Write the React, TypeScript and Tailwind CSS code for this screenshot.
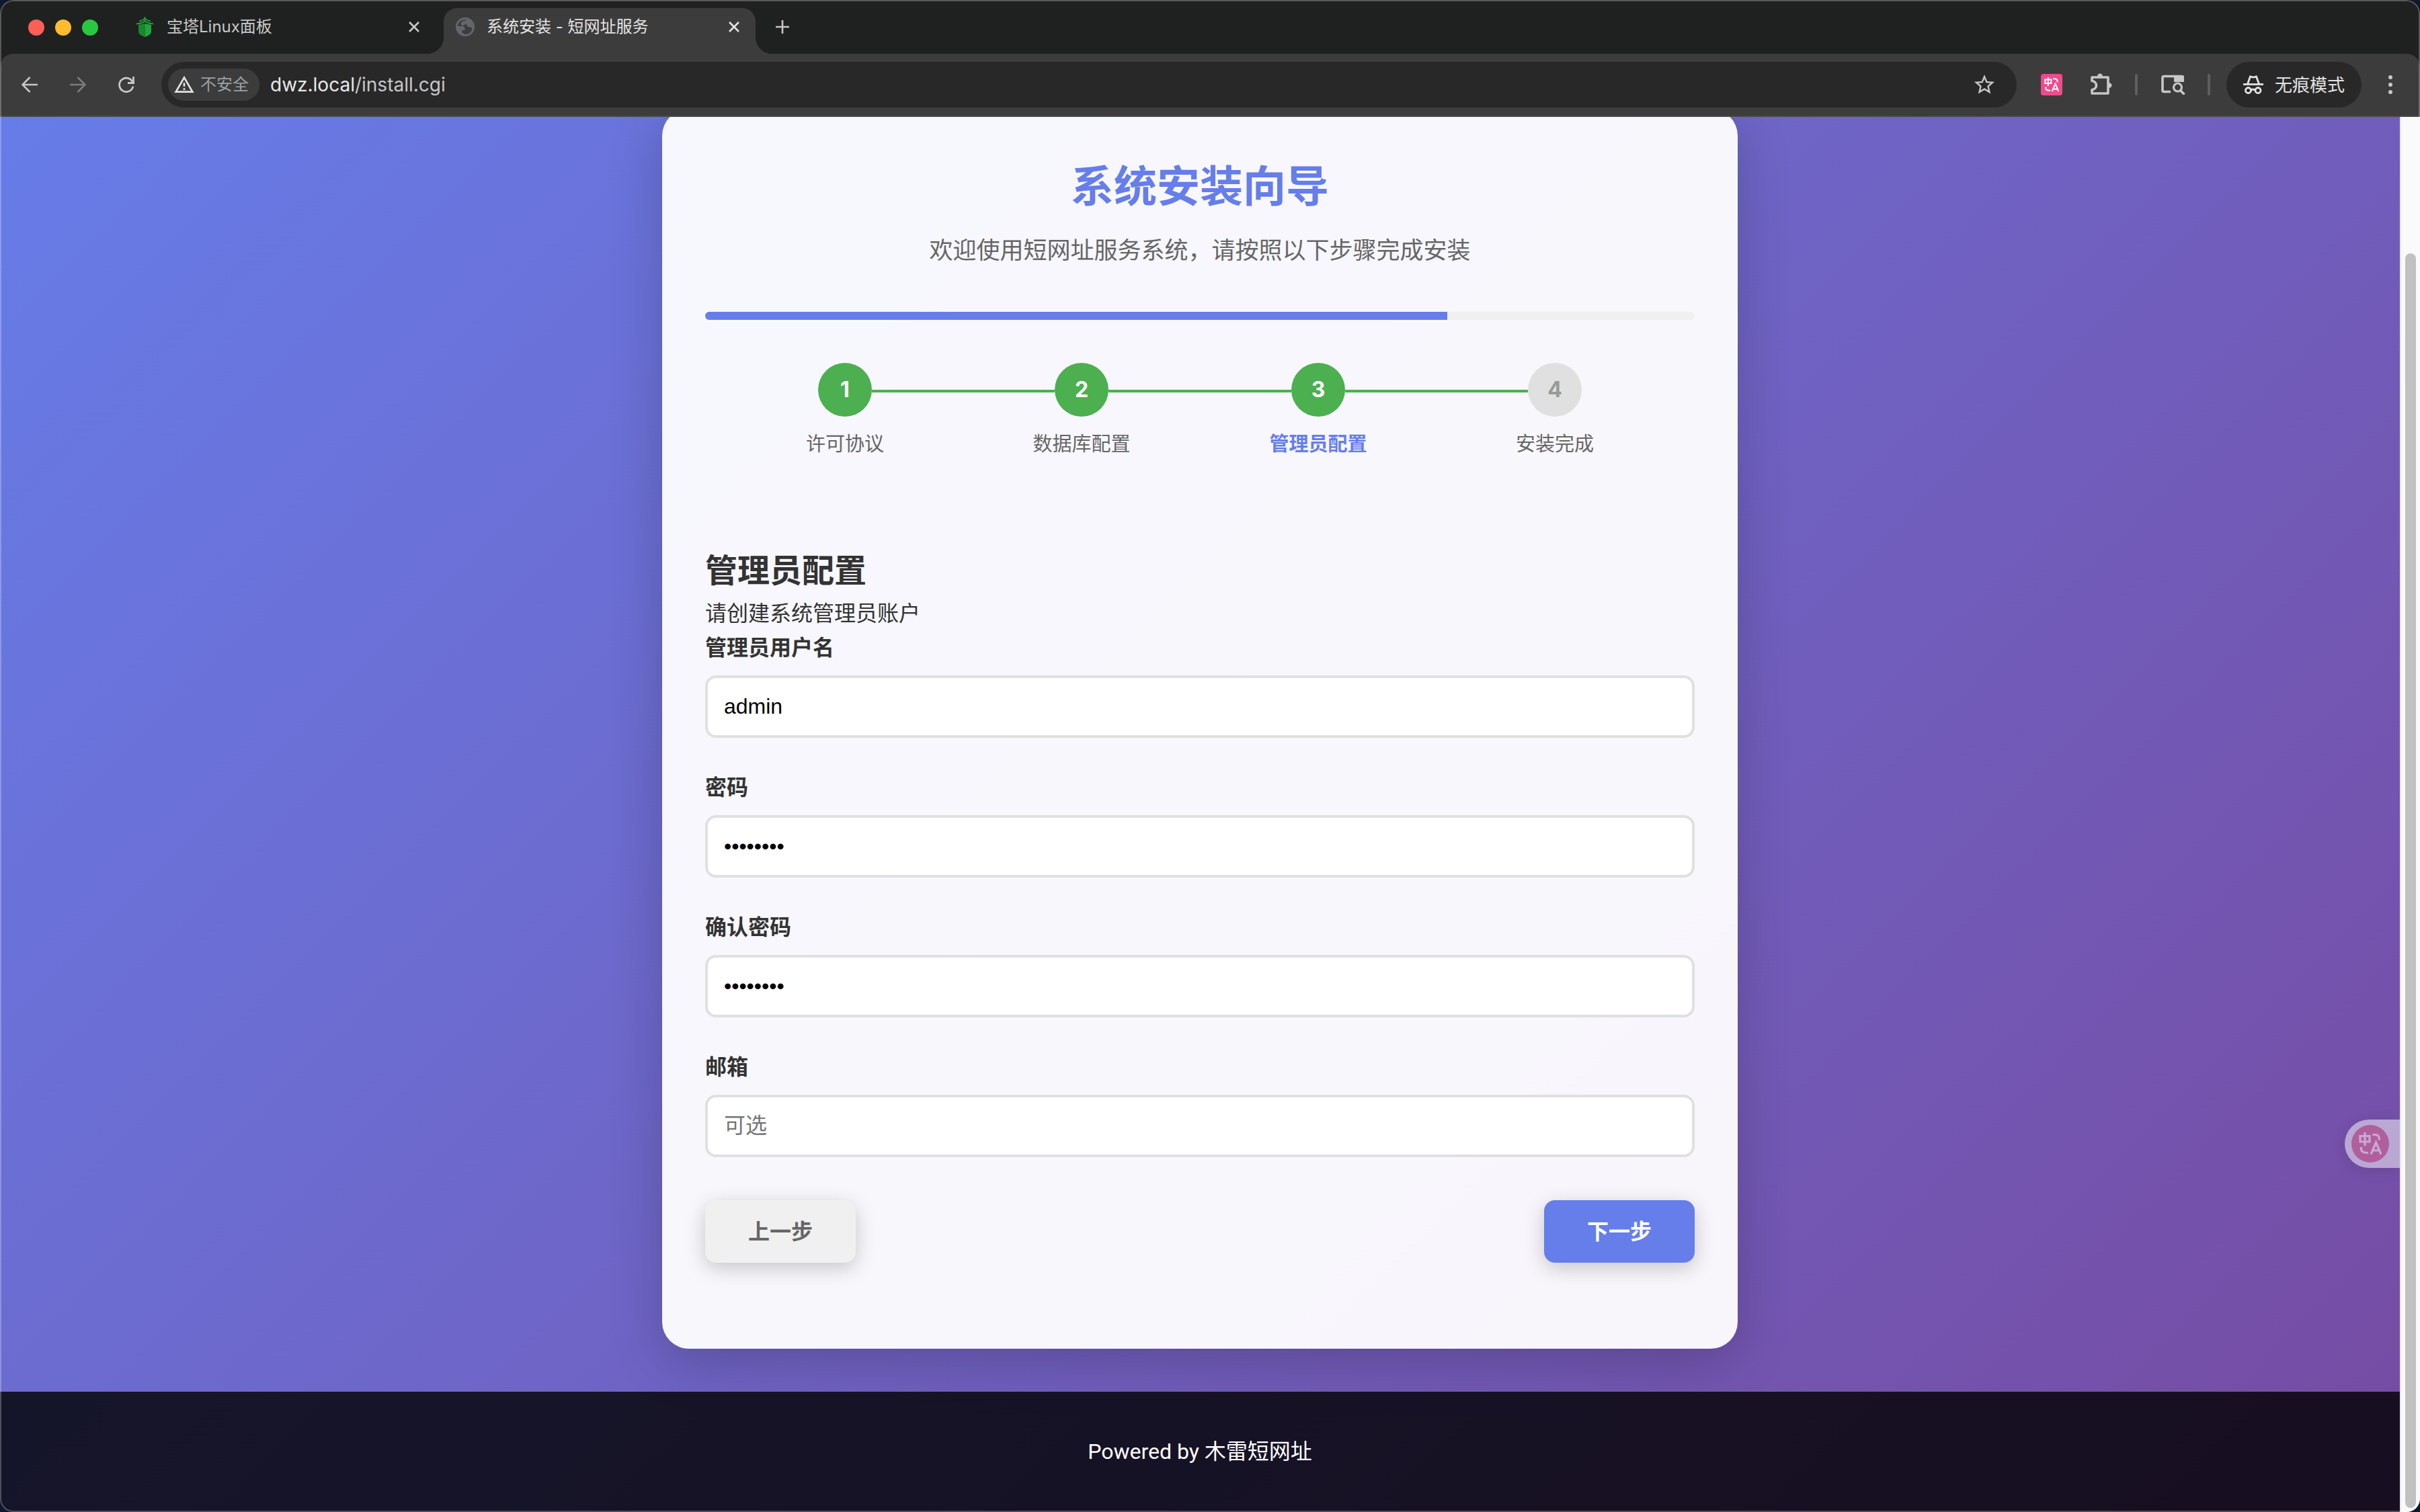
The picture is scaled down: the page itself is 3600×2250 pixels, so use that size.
import { useState } from 'react';
import type { InputHTMLAttributes, ReactNode } from 'react';
import { MdOutlineWarningAmber, MdStarBorder } from 'react-icons/md';

const STEPS = ['许可协议', '数据库配置', '管理员配置', '安装完成'];
const CURRENT_STEP = 3;

function CloseIcon() {
  return (
    <svg width="16" height="16" viewBox="0 0 16 16" fill="none" stroke="currentColor" strokeWidth="2.6">
      <path d="M1 1l14 14M15 1L1 15" />
    </svg>
  );
}

function GlobeIcon() {
  return (
    <svg width="28" height="28" viewBox="0 0 28 28">
      <circle cx="14" cy="14" r="14" fill="#63666d" />
      <path d="M3 13h6.5c2.500 0 4 1.500 4 3.500v2.500H9.500v3.500l4 2.500c5 .3 9-2.500 10.800-7l-1-3.500h-3.800c-1.500 0-2.500-1-2.500-2.500v-1.500h-4.500V7.500c0-1.500 1-2 2.500-2V3.200C8.500 2.500 3.500 7 3 13z" fill="#3c3c3c" />
      <path d="M9 6.500c2-1.500 4-2 6-1.500v2c-1.500 0-2.500.8-2.500 2v3h-3L7 10z" fill="#63666d" />
    </svg>
  );
}

function TranslateGlyph({ className }: { className: string }) {
  return (
    <svg className={className} viewBox="0 0 34 34" fill="none" stroke="currentColor" strokeWidth="3.2">
      <path d="M2 5.5h14V14H2zM9 0v20" />
      <path d="M20.5 3.5h4q6 0 6 8M3.5 22v3q0 5.5 10.5 5.5" />
      <path d="M18 32.5L25.5 15 33 32.5M20.5 27h10" />
    </svg>
  );
}

function PagodaIcon() {
  return (
    <svg width="28" height="30" viewBox="0 0 28 30">
      <path d="M13.5 10L4 12v10c0 4 5 6.500 9.500 8z" fill="#19872d" />
      <path d="M13.5 10l9.500 2v10c0 4-5 6.500-9.500 8z" fill="#20a53a" />
      <path d="M5 6.5q6-1 8.500-4.500 2.500 3.500 8.500 4.500M1 10.500Q9.500 10 13.500 6q4 4 12.500 4.500" fill="none" stroke="#20a53a" strokeWidth="1.8" />
      <path d="M13.5 0v5" stroke="#20a53a" strokeWidth="1.5" />
    </svg>
  );
}

function TabBar() {
  return (
    <div className="flex h-20 bg-[#1f2120] text-2xl text-[#c7c7c7]">
      <div className="flex items-center gap-4 pl-[42px] pt-0.5">
        <span className="size-6 rounded-full bg-[#ff5f57]" />
        <span className="size-6 rounded-full bg-[#febc2e]" />
        <span className="size-6 rounded-full bg-[#28c840]" />
      </div>

      <div className="ml-14 mr-9 flex h-20 w-[422px] items-center gap-[18px]">
        <PagodaIcon />
        <span className="flex-1">宝塔Linux面板</span>
        <button type="button" aria-label="关闭标签页">
          <CloseIcon />
        </button>
      </div>

      <div className="relative mt-3 flex w-[464px] items-center gap-[18px] rounded-t-[20px] bg-[#3c3c3c] pb-3 pl-[18px] pr-6 text-[#e3e3e3]">
        <span className="absolute -left-6 bottom-0 size-6 bg-[radial-gradient(circle_at_0_0,transparent_24px,#3c3c3c_24px)]" />
        <GlobeIcon />
        <span className="flex-1">系统安装 - 短网址服务</span>
        <button type="button" aria-label="关闭标签页">
          <CloseIcon />
        </button>
        <span className="absolute -right-6 bottom-0 size-6 bg-[radial-gradient(circle_at_100%_0,transparent_24px,#3c3c3c_24px)]" />
      </div>

      <button type="button" aria-label="新标签页" className="ml-[30px]">
        <svg width="20" height="20" viewBox="0 0 20 20" stroke="currentColor" strokeWidth="2.6">
          <path d="M10 0v20M0 10h20" />
        </svg>
      </button>
    </div>
  );
}

function Toolbar() {
  return (
    <div className="bg-[#1f2120]">
      <div className="flex h-[94px] items-center rounded-t-[20px] border-b-2 border-[#4a4a4a] bg-[#3c3c3c] pl-8 pr-[41px] text-[#c7c7c7]">
        <button type="button" aria-label="后退">
          <svg width="24" height="24" viewBox="0 0 24 24" fill="none" stroke="currentColor" strokeWidth="2.6">
            <path d="M12.5 1L1.5 12l11 11M1.5 12H24" />
          </svg>
        </button>
        <button type="button" aria-label="前进" className="ml-12 text-[#7c7c7c]">
          <svg width="24" height="24" viewBox="0 0 24 24" fill="none" stroke="currentColor" strokeWidth="2.6">
            <path d="M11.5 1l11 11-11 11M22.500 12H0" />
          </svg>
        </button>
        <button type="button" aria-label="重新加载" className="ml-12">
          <svg width="24" height="24" viewBox="0 0 24 24" fill="none" stroke="currentColor" strokeWidth="2.8">
            <path d="M22 14.5A10.3 10.3 0 1 1 21.5 8.5" />
            <path d="M22.5 0v9.500H14" />
          </svg>
        </button>

        <div className="ml-10 flex h-[68px] flex-1 items-center rounded-full bg-[#282828] pl-2.5 pr-[30px]">
          <span className="flex h-12 items-center gap-2 rounded-full bg-[#3c3c3c] pl-2 pr-4 text-2xl text-[#9aa0a6]">
            <MdOutlineWarningAmber className="size-8 text-[#e3e3e3]" />
            不安全
          </span>
          <div className="ml-4 flex-1 text-[28px] leading-10 text-[#c7c7c7]">
            <span className="text-[#e8e8e8]">dwz.local</span>/install.cgi
          </div>
          <button type="button" aria-label="收藏">
            <MdStarBorder className="size-9" />
          </button>
        </div>

        <button type="button" aria-label="翻译" className="ml-9 flex size-8 items-center justify-center rounded bg-[#ef4b8c] text-white">
          <TranslateGlyph className="size-[22px]" />
        </button>
        <button type="button" aria-label="扩展程序" className="ml-[42px]">
          <svg width="32" height="34" viewBox="0 0 32 34" fill="none" stroke="currentColor" strokeWidth="3.6">
            <path d="M2 6h24v24H2v-5.5a6.500 6.500 0 0 0 0-13z" strokeLinejoin="round" />
            <path d="M10 5a4 4.500 0 0 1 8 0zM27 14a4.500 4 0 0 1 0 8z" fill="currentColor" stroke="none" />
          </svg>
        </button>
        <span className="ml-[34px] h-8 w-1 rounded-full bg-[#5f5f5f]" />
        <button type="button" aria-label="搜索标签页" className="ml-[35px]">
          <svg width="36" height="30" viewBox="0 0 36 30" fill="none" stroke="currentColor" strokeWidth="3.6">
            <path d="M14 25.5H4a2 2 0 0 1-2-2V4.500a2 2 0 0 1 2-2h26" />
            <path d="M19 1h13a2 2 0 0 1 2 2v8H19z" fill="currentColor" stroke="none" />
            <circle cx="24.5" cy="19" r="6" strokeWidth="3.2" />
            <path d="M28.5 23.5l6 6" />
          </svg>
        </button>
        <span className="ml-[33px] h-8 w-1 rounded-full bg-[#5f5f5f]" />

        <div className="ml-6 flex h-[68px] items-center gap-[17px] rounded-full bg-[#282828] px-[25px] text-[26px] text-[#e3e3e3]">
          <svg width="30" height="28" viewBox="0 0 30 28" fill="none" stroke="currentColor" strokeWidth="2.8">
            <path d="M0 13.5h30" />
            <path d="M6.5 13l4-11 4.5 1 4.5-1 4 11" />
            <circle cx="7.5" cy="22.5" r="4" />
            <circle cx="22" cy="22.5" r="4" />
            <path d="M11.5 22q3.3-2 6.500 0" />
          </svg>
          无痕模式
        </div>
        <button type="button" aria-label="更多" className="ml-10">
          <svg width="6" height="28" viewBox="0 0 6 28" fill="currentColor">
            <circle cx="3" cy="3" r="3" />
            <circle cx="3" cy="14" r="3" />
            <circle cx="3" cy="25" r="3" />
          </svg>
        </button>
      </div>
    </div>
  );
}

function Steps() {
  return (
    <ol className="mt-16 flex px-8">
      {STEPS.map((label, i) => {
        const n = i + 1;
        const done = n <= CURRENT_STEP;
        return (
          <li key={label} className="flex flex-1 flex-col items-center">
            <div className="flex w-full">
              <span className={`mt-10 h-1 flex-1 ${i > 0 ? 'bg-[#4caf50]' : ''}`} />
              <span
                className={`flex size-20 items-center justify-center rounded-full text-[32px] font-bold ${
                  done ? 'bg-[#4caf50] text-white' : 'bg-[#e0e0e0] text-[#999999]'
                }`}
              >
                {n}
              </span>
              <span className={`mt-10 h-1 flex-1 ${n < STEPS.length ? 'bg-[#4caf50]' : ''}`} />
            </div>
            <span
              className={`mt-4 text-[29px] leading-[50px] ${
                n === CURRENT_STEP ? 'font-bold text-[#667eea]' : 'text-[#666666]'
              }`}
            >
              {label}
            </span>
          </li>
        );
      })}
    </ol>
  );
}

type FieldProps = InputHTMLAttributes<HTMLInputElement> & { id: string; label: string };

function Field({ id, label, ...props }: FieldProps) {
  return (
    <div className="flex flex-col gap-4">
      <label htmlFor={id} className="text-[32px] font-semibold leading-[51px]">
        {label}
      </label>
      <input
        id={id}
        {...props}
        className="h-[93px] w-full rounded-2xl border-4 border-[#e0e0e0] bg-white px-6 font-['Liberation_Sans','Noto_Sans_CJK_SC',sans-serif] text-[32px] text-black outline-none placeholder:text-[#757575]"
      />
    </div>
  );
}

function WizardButton({ className, children }: { className: string; children: ReactNode }) {
  return (
    <button
      type="button"
      className={`rounded-2xl px-16 py-7 text-[32px] font-semibold leading-[37px] shadow-[0_8px_30px_rgba(0,0,0,0.2)] ${className}`}
    >
      {children}
    </button>
  );
}

function InstallCard() {
  const [form, setForm] = useState({ username: 'admin', password: 'admin123', confirm: 'admin123', email: '' });

  function update(key: keyof typeof form, value: string) {
    setForm({ ...form, [key]: value });
  }

  return (
    <section className="mx-auto -mt-3 mb-16 w-full max-w-[1600px] rounded-[40px] bg-white/95 px-16 pb-32 pt-16 text-[#333333] shadow-[0_20px_80px_rgba(0,0,0,0.2)]">
      <header className="text-center">
        <h1 className="text-[64px] font-bold leading-[102px] text-[#667eea]">系统安装向导</h1>
        <p className="mt-4 text-[35px] leading-[56px] text-[#666666]">欢迎使用短网址服务系统，请按照以下步骤完成安装</p>
      </header>

      <div className="mt-16 h-3 overflow-hidden rounded-full bg-[#f0f0f0]">
        <div className="h-full w-3/4 bg-[#667eea]" />
      </div>
      <Steps />

      <form className="mt-[124px]">
        <h2 className="text-5xl font-bold leading-[77px]">管理员配置</h2>
        <p className="text-[32px] leading-[51px]">请创建系统管理员账户</p>
        <div className="flex flex-col gap-12">
          <Field id="username" label="管理员用户名" type="text" value={form.username} onChange={(e) => update('username', e.target.value)} />
          <Field id="password" label="密码" type="password" value={form.password} onChange={(e) => update('password', e.target.value)} />
          <Field id="confirm" label="确认密码" type="password" value={form.confirm} onChange={(e) => update('confirm', e.target.value)} />
          <Field id="email" label="邮箱" type="email" placeholder="可选" value={form.email} onChange={(e) => update('email', e.target.value)} />
        </div>
        <div className="mt-16 flex justify-between">
          <WizardButton className="bg-[#f0f0f0] text-[#666666]">上一步</WizardButton>
          <WizardButton className="bg-[#667eea] text-white">下一步</WizardButton>
        </div>
      </form>
    </section>
  );
}

export default function App() {
  return (
    <div className="h-screen bg-[#10182e] font-['Inter','Noto_Sans_CJK_SC',sans-serif]">
      <div className="relative flex h-full flex-col overflow-hidden rounded-[20px]">
        <TabBar />
        <Toolbar />

        <div className="flex min-h-0 flex-1">
          <div className="relative flex flex-1 flex-col overflow-hidden bg-[linear-gradient(135deg,#667eea_0%,#764ba2_100%)] bg-[length:100%_calc(100%+226px)] bg-bottom">
            <main className="flex-1">
              <InstallCard />
            </main>
            <footer className="bg-black/80 py-16 text-center font-['Roboto','Noto_Sans_CJK_SC',sans-serif] text-[32px] leading-[51px] text-white">
              Powered by 木雷短网址
            </footer>

            {/* floating translate handle */}
            <button
              type="button"
              aria-label="翻译此页"
              className="absolute right-0 top-[1492px] flex h-[72px] w-[82px] items-center rounded-l-full bg-white/50 pl-2.5 shadow-[0_4px_20px_rgba(0,0,0,0.1)]"
            >
              <span className="flex size-14 items-center justify-center rounded-full bg-[#b05f9d] text-[#cba9d3]">
                <TranslateGlyph className="size-[34px]" />
              </span>
            </button>
          </div>

          <div className="flex w-[30px] flex-col border-l-2 border-[#e8e8e8] bg-[#fafafa] pb-1.5 pl-1.5 pr-1.5 pt-[203px]">
            <div className="flex-1 rounded-full bg-[#c1c1c1]" />
          </div>
        </div>

        <div className="pointer-events-none absolute inset-0 rounded-[20px] border-2 border-white/25" />
      </div>
    </div>
  );
}
